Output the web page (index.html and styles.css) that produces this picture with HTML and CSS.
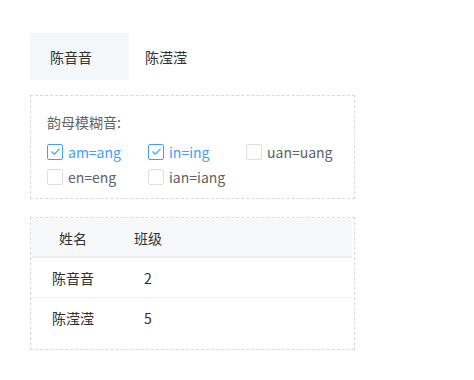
FILE: index.html
```html
<!DOCTYPE html>
<html lang="zh-CN">

<head>
    <meta charset="UTF-8">
    <title>Fuzzy Pinyin</title>
    <link rel="stylesheet" href="styles.css">
</head>

<body>
    <div class="page">
        <div class="tabs">
            <div class="tab active">陈音音</div>
            <div class="tab">陈滢滢</div>
        </div>

        <div class="fuzzy">
            <div class="fuzzy-label">韵母模糊音:</div>
            <div class="options">
                <label class="option checked"><span class="box"><svg viewBox="0 0 15 15" width="15" height="15"><path d="M3.5 7.5 L6.3 10.2 L11.5 4.8" fill="none" stroke="#409eff" stroke-width="1.2"/></svg></span>am=ang</label>
                <label class="option checked"><span class="box"><svg viewBox="0 0 15 15" width="15" height="15"><path d="M3.5 7.5 L6.3 10.2 L11.5 4.8" fill="none" stroke="#409eff" stroke-width="1.2"/></svg></span>in=ing</label>
                <label class="option"><span class="box"></span>uan=uang</label>
                <label class="option"><span class="box"></span>en=eng</label>
                <label class="option"><span class="box"></span>ian=iang</label>
            </div>
        </div>

        <div class="table-wrap">
            <div class="row head">
                <div class="cell">姓名</div>
                <div class="cell">班级</div>
            </div>
            <div class="row">
                <div class="cell">陈音音</div>
                <div class="cell">2</div>
            </div>
            <div class="row">
                <div class="cell">陈滢滢</div>
                <div class="cell">5</div>
            </div>
        </div>
    </div>
</body>

</html>
```

FILE: styles.css
```css
body {
    margin: 0;
    background-color: #fff;
    font-family: "Noto Sans CJK SC", "Noto Sans", sans-serif;
    font-size: 14px;
    color: #303133;
}

.page {
    width: 325px;
    padding: 33px 0 0 30px;
}

.tabs {
    display: flex;
    height: 47px;
    margin-bottom: 15px;
}

.tab {
    display: flex;
    align-items: center;
    padding-left: 16px;
    width: 84px;
}

.tab.active {
    background-color: #f4f7fa;
    padding-left: 20px;
    width: 79px;
}

.fuzzy {
    border: 1px dashed #d6d9df;
    padding: 15px 16px 9px;
    color: #606266;
}

.fuzzy-label {
    line-height: 22px;
}

.options {
    display: grid;
    grid-template-columns: 101px 98px auto;
    margin-top: 6px;
}

.option {
    display: flex;
    align-items: center;
    height: 25px;
    font-size: 14px;
}

.option.checked {
    color: #409eff;
}

.box {
    box-sizing: border-box;
    width: 16px;
    height: 16px;
    border: 1px solid #dcdfe6;
    border-radius: 2px;
    margin-right: 5px;
    display: flex;
}

.box svg {
    margin: -0.5px;
}

.option.checked .box {
    border-color: #409eff;
}

.table-wrap {
    margin-top: 18px;
    border: 1px dashed #d6d9df;
    padding: 1px 2px 12px 1px;
}

.row {
    display: grid;
    grid-template-columns: 82px 68px;
    height: 39px;
    border-bottom: 1px solid #ebeef5;
}

.row:last-child {
    border-bottom: none;
}

.row.head {
    background-color: #f7f8fa;
    height: 37px;
    border-bottom: 2px solid #ebeef5;
}

.cell {
    display: flex;
    align-items: center;
    justify-content: center;
}
```
